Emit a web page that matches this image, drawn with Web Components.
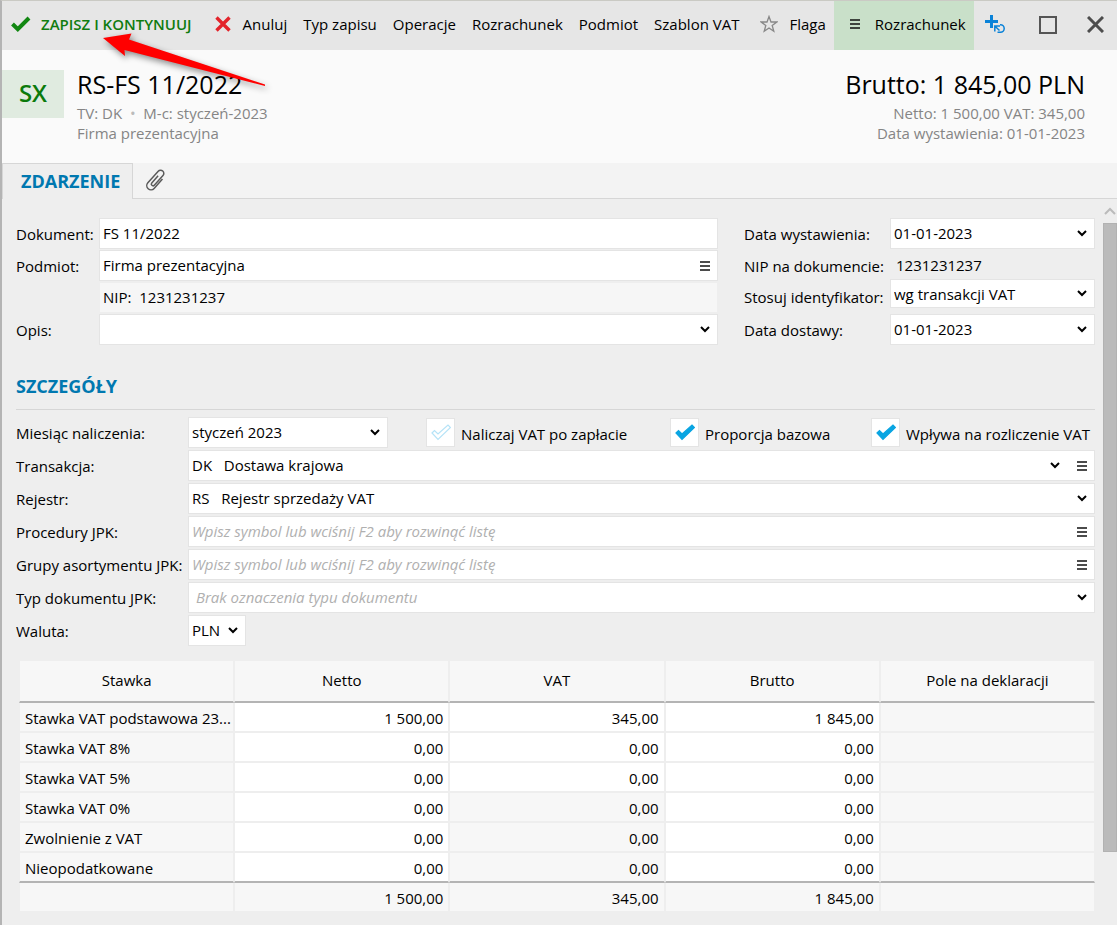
<!DOCTYPE html>
<html lang="pl">
<head>
<meta charset="utf-8">
<title>RS-FS 11/2022</title>
<meta name="viewport" content="width=device-width, initial-scale=1">
<style>
  body{
    margin:0;
    background:#eee;
    color:#000;
    font:15px/20px "Open Sans", "Noto Sans", sans-serif;
  }
</style>
</head>
<body>
<doc-window>
  <tool-bar slot="toolbar">
    <tool-button icon="check" kind="primary">ZAPISZ I KONTYNUUJ</tool-button>
    <tool-button icon="cancel">Anuluj</tool-button>
    <tool-button>Typ zapisu</tool-button>
    <tool-button>Operacje</tool-button>
    <tool-button>Rozrachunek</tool-button>
    <tool-button>Podmiot</tool-button>
    <tool-button>Szablon VAT</tool-button>
    <tool-button icon="star">Flaga</tool-button>
    <tool-button icon="menu" kind="active">Rozrachunek</tool-button>
    <tool-button slot="window" icon="add" label="Dodaj kolejny"></tool-button>
    <tool-button slot="window" icon="maximize" label="Maksymalizuj"></tool-button>
    <tool-button slot="window" icon="close" label="Zamknij"></tool-button>
  </tool-bar>
  <doc-header slot="header" badge="SX">
    <span slot="title">RS-FS 11/2022</span>
    <span slot="info">TV: DK &nbsp;<i style="color:#bbb;font-style:normal">•</i>&nbsp; M-c: styczeń-2023</span>
    <span slot="info">Firma prezentacyjna</span>
    <span slot="total">Brutto: 1 845,00 PLN</span>
    <span slot="sums">Netto: 1 500,00 VAT: 345,00</span>
    <span slot="sums">Data wystawienia: 01-01-2023</span>
  </doc-header>
  <tab-strip slot="tabs" label="ZDARZENIE"></tab-strip>

  <event-form>
    <form-field slot="main" label="Dokument:" value="FS 11/2022"></form-field>
    <form-field slot="main" label="Podmiot:" value="Firma prezentacyjna" menu></form-field>
    <form-field slot="main" type="info" value="NIP:&nbsp; 1231231237"></form-field>
    <form-field slot="main" label="Opis:" type="select" value=""></form-field>

    <form-field slot="side" label="Data wystawienia:" type="select" value="01-01-2023"></form-field>
    <form-field slot="side" label="NIP na dokumencie:" type="plain" value="1231231237"></form-field>
    <form-field slot="side" label="Stosuj identyfikator:" type="select" value="wg transakcji VAT" compact></form-field>
    <form-field slot="side" label="Data dostawy:" type="select" value="01-01-2023"></form-field>

    <form-field slot="month" label="Miesiąc naliczenia:" type="select" value="styczeń 2023"></form-field>
    <check-box slot="checks" label="Naliczaj VAT po zapłacie"></check-box>
    <check-box slot="checks" label="Proporcja bazowa" checked></check-box>
    <check-box slot="checks" label="Wpływa na rozliczenie VAT" checked></check-box>

    <form-field slot="details" label="Transakcja:" type="select" value="DK &nbsp; Dostawa krajowa" menu></form-field>
    <form-field slot="details" label="Rejestr:" type="select" value="RS &nbsp; Rejestr sprzedaży VAT"></form-field>
    <form-field slot="details" label="Procedury JPK:" placeholder="Wpisz symbol lub wciśnij F2 aby rozwinąć listę" menu></form-field>
    <form-field slot="details" label="Grupy asortymentu JPK:" placeholder="Wpisz symbol lub wciśnij F2 aby rozwinąć listę" menu></form-field>
    <form-field slot="details" label="Typ dokumentu JPK:" type="select" value="&nbsp;Brak oznaczenia typu dokumentu" muted></form-field>
    <form-field slot="details" label="Waluta:" type="select" value="PLN" short></form-field>

    <vat-table slot="table"></vat-table>
  </event-form>
  <scroll-track slot="scroll"></scroll-track>
  <pointer-arrow slot="overlay"></pointer-arrow>
</doc-window>

<script>
(function(w, doc) {
  'use strict';

  const icons = {
    check: '<svg width="20" height="16" viewBox="0 0 20 16"><path d="M1.5 8 6.8 13.2 18 2" fill="none" stroke="#128712" stroke-width="4"/></svg>',
    cancel: '<svg width="16" height="16" viewBox="0 0 16 16"><path d="M1.5 1.5 14.5 14.5M14.5 1.5 1.5 14.5" fill="none" stroke="#e3242b" stroke-width="3.4"/></svg>',
    star: '<svg width="18" height="18" viewBox="0 0 18 18"><path d="M9 1.5 11 7H16.8L12.2 10.5 13.8 16.3 9 13 4.2 16.3 5.8 10.5 1.2 7H7Z" fill="none" stroke="#888" stroke-width="1.3"/></svg>',
    menu: '<svg width="10" height="10" viewBox="0 0 10 10"><path d="M0 1H10M0 5H10M0 9H10" stroke="#111" stroke-width="1.6"/></svg>',
    add: '<svg width="20" height="19" viewBox="0 0 20 19"><path d="M6.5 0V13M0 6.5H13" fill="none" stroke="#0a82d8" stroke-width="3"/><path d="M15 9.8H15.5A3.7 3.7 0 0 1 15.5 17.2H12.5M9.8 16.5V11H15M10 11.2 14.5 15.5" fill="none" stroke="#0a82d8" stroke-width="1.5"/></svg>',
    maximize: '<svg width="18" height="18" viewBox="0 0 18 18"><rect x="1" y="1" width="16" height="16" fill="none" stroke="#555" stroke-width="2"/></svg>',
    close: '<svg width="17" height="17" viewBox="0 0 17 17"><path d="M1 1 16 16M16 1 1 16" fill="none" stroke="#4d4d4d" stroke-width="3"/></svg>',
    clip: '<svg width="24" height="26" viewBox="-12 -13 24 26"><path transform="rotate(42)" d="M4.2 -5V7.5A4.2 4.2 0 0 1 -4.2 7.5V-8A3.2 3.2 0 0 1 2.2 -8V5A1.7 1.7 0 0 1 -1.2 5V-4.5" fill="none" stroke="#5a5a5a" stroke-width="1.5"/></svg>',
    chevron: '<svg width="10" height="7" viewBox="0 0 10 7"><path d="M1 1 5 5 9 1" fill="none" stroke="#000" stroke-width="2"/></svg>'
  };

  // shared by every element: open root filled from a template
  class BaseElement extends HTMLElement {
    constructor() {
      super();
      const template = doc.createElement('template');
      template.innerHTML = this.render();
      this.attachShadow({ mode: 'open' });
      this.shadowRoot.appendChild(template.content.cloneNode(true));
    }
    attr(name) {
      return this.getAttribute(name) || '';
    }
  }

  class DocWindow extends BaseElement {
    render() {
      return `
        <style>
          :host{
            display:flex;
            flex-direction:column;
            position:relative;
            box-sizing:border-box;
            min-height:100vh;
            border-left:2px solid #b4b4b4;
            border-top:1px solid #cacac4;
          }
          main{
            flex:1;
            display:grid;
            grid-template-columns:minmax(0,1fr) 14px;
            gap:8px;
          }
        </style>
        <slot name="toolbar"></slot>
        <slot name="header"></slot>
        <slot name="tabs"></slot>
        <main>
          <slot></slot>
          <slot name="scroll"></slot>
        </main>
        <slot name="overlay"></slot>`;
    }
  }

  class ToolBar extends BaseElement {
    render() {
      return `
        <style>
          :host{
            display:flex;
            justify-content:space-between;
            height:49px;
            background:#e6e6e6;
          }
          div{
            display:flex;
          }
        </style>
        <div role="toolbar"><slot></slot></div>
        <div><slot name="window"></slot></div>`;
    }
  }

  class ToolButton extends BaseElement {
    render() {
      const icon = icons[this.attr('icon')] || '';
      const label = this.attr('label');
      return `
        <style>
          :host{
            display:flex;
          }
          button{
            display:flex;
            align-items:center;
            gap:12px;
            padding:0 8px 4px;
            border:none;
            background:none;
            color:#000;
            font:inherit;
            white-space:nowrap;
            cursor:pointer;
          }
          :host([kind="primary"]) button{
            gap:10px;
            padding:0 15px 4px 9px;
            color:#107c10;
            font-weight:600;
          }
          :host([icon="star"]) button{
            padding-left:13px;
            gap:11px;
          }
          :host([kind="active"]) button{
            gap:15px;
            padding:0 8px 4px 16px;
            background:#c9e0c9;
          }
          :host([slot="window"]) button{
            padding:0 13px 2px 17px;
          }
          :host([slot="window"][icon="add"]) button{
            padding:0 17px 2px 0;
          }
        </style>
        <button type="button" ${label ? `aria-label="${label}"` : ''}>${icon}<slot></slot></button>`;
    }
  }

  class DocHeader extends BaseElement {
    render() {
      return `
        <style>
          :host{
            display:flex;
            box-sizing:border-box;
            height:113px;
            padding:20px 32px 0 0;
            background:#fafafa;
            color:#858585;
          }
          .badge{
            width:62px;
            height:48px;
            margin-right:13px;
            background:#e0ebe0;
            color:#0b7a0b;
            font-size:24px;
            line-height:46px;
            font-weight:600;
            text-align:center;
          }
          .right{
            flex:1;
            text-align:right;
          }
          h1, .total{
            margin:0 0 5px;
            color:#000;
            font-size:25px;
            line-height:28px;
            font-weight:400;
          }
          ::slotted([slot="info"]), ::slotted([slot="sums"]){
            display:block;
          }
        </style>
        <div class="badge">${this.attr('badge')}</div>
        <div>
          <h1><slot name="title"></slot></h1>
          <slot name="info"></slot>
        </div>
        <div class="right">
          <div class="total"><slot name="total"></slot></div>
          <slot name="sums"></slot>
        </div>`;
    }
  }

  class TabStrip extends BaseElement {
    render() {
      return `
        <style>
          :host{
            display:flex;
            height:36px;
            background:#f3f3f3;
            box-shadow:inset 0 -1px #d6d6d6;
          }
          button{
            display:flex;
            align-items:center;
            padding:0 11px 2px;
            border:none;
            background:none;
            font:inherit;
          }
          [aria-selected="true"]{
            padding:0 12px 2px 18px;
            border:1px solid #d6d6d6;
            border-bottom:none;
            background:#eee;
            color:#0078b0;
            font-size:18px;
            font-weight:700;
          }
        </style>
        <button type="button" role="tab" aria-selected="true">${this.attr('label')}</button>
        <button type="button" role="tab" aria-label="Załączniki">${icons.clip}</button>`;
    }
  }

  class EventForm extends BaseElement {
    render() {
      return `
        <style>
          :host{
            display:block;
            padding:19px 0 14px 14px;
          }
          .top{
            display:grid;
            grid-template-columns:minmax(0,1fr) 351px;
            gap:26px;
          }
          .main, .side{
            display:grid;
          }
          .main{
            --label-width:83px;
            grid-template-rows:repeat(3,32px) 31px;
          }
          .side{
            --label-width:146px;
            grid-template-rows:32px 29px 35px 31px;
          }
          h2{
            margin:29px 0 7px;
            padding-bottom:11px;
            border-bottom:1px solid #d6d6d6;
            color:#0078b0;
            font-size:18px;
            line-height:24px;
            font-weight:700;
          }
          .period{
            --label-width:172px;
            display:grid;
            grid-template-columns:372px minmax(0,1fr);
            gap:38px;
          }
          .checks{
            display:grid;
            grid-template-columns:244fr 201fr 224fr;
          }
          .details{
            --label-width:172px;
            display:grid;
            grid-auto-rows:31px;
            gap:2px;
            margin:2px 0 15px;
          }
        </style>
        <form>
          <div class="top">
            <div class="main"><slot name="main"></slot></div>
            <div class="side"><slot name="side"></slot></div>
          </div>
          <h2>SZCZEGÓŁY</h2>
          <div class="period">
            <slot name="month"></slot>
            <div class="checks"><slot name="checks"></slot></div>
          </div>
          <div class="details"><slot name="details"></slot></div>
          <slot name="table"></slot>
        </form>`;
    }
  }

  class FormField extends BaseElement {
    render() {
      const label = this.attr('label');
      const value = this.attr('value');
      const type = this.attr('type') || 'text';
      const menu = this.hasAttribute('menu');
      let control = '';
      if (type === 'select')
        control = `<select id="control"><option>${value}</option></select><span class="arrow">${icons.chevron}</span>`;
      else if (type === 'text')
        control = `<input id="control" type="text" value="${value}" placeholder="${this.attr('placeholder')}">`;
      else
        control = `<output id="control">${value}</output>`;
      return `
        <style>
          :host{
            display:grid;
            grid-template-columns:var(--label-width) minmax(0,1fr);
            align-items:start;
          }
          label{
            padding-top:6px;
            white-space:nowrap;
          }
          :host([compact]) label{
            padding-top:8px;
          }
          .box{
            grid-column:2;
            display:flex;
            position:relative;
            box-sizing:border-box;
            height:31px;
            border:1px solid #e4e4e4;
            background:#fff;
          }
          :host([compact]) .box{
            height:29px;
          }
          :host([short]) .box{
            width:58px;
          }
          .info{
            border-color:#eee;
            background:#f6f6f6;
          }
          .plain{
            padding-left:2px;
            border-color:transparent;
            background:none;
          }
          input, select, output{
            flex:1;
            min-width:0;
            margin:0;
            padding:0 3px 1px;
            border:none;
            outline:none;
            background:none;
            color:#000;
            font:inherit;
            line-height:28px;
            appearance:none;
          }
          :host([muted]) select, input::placeholder{
            color:#b0b0b0;
            font-style:italic;
            opacity:1;
          }
          .arrow{
            position:absolute;
            right:7px;
            top:0;
            bottom:0;
            display:flex;
            align-items:center;
            pointer-events:none;
          }
          :host([menu]) .arrow{
            right:34px;
          }
          button{
            display:flex;
            align-items:center;
            padding:0 7px;
            border:none;
            background:none;
          }
        </style>
        ${label ? `<label for="control">${label}</label>` : ''}
        <div class="box ${type}">
          ${control}
          ${menu ? `<button type="button" aria-label="Lista">${icons.menu}</button>` : ''}
        </div>`;
    }
  }

  class CheckBox extends BaseElement {
    render() {
      const on = this.hasAttribute('checked');
      return `
        <style>
          :host{
            display:block;
          }
          label{
            display:flex;
            gap:6px;
            white-space:nowrap;
          }
          .text{
            padding-top:7px;
          }
          .box{
            display:grid;
            place-items:center;
            flex:none;
            box-sizing:border-box;
            width:29px;
            height:29px;
            margin-top:1px;
            border:1px solid #e4e4e4;
            background:#fff;
          }
          input, svg{
            grid-area:1 / 1;
          }
          input{
            width:27px;
            height:27px;
            margin:0;
            appearance:none;
          }
          svg{
            pointer-events:none;
            fill:#fff;
            stroke:#b5e3f7;
          }
          input:checked + svg{
            fill:#0aa5e2;
            stroke:#0aa5e2;
          }
        </style>
        <label>
          <span class="box">
            <input type="checkbox" ${on ? 'checked' : ''}>
            <svg width="21" height="17" viewBox="0 0 21 17"><path d="M2 9 4.5 6.5 8 10 18 1 20.5 3.5 8 15.5Z" stroke-width="1.2"/></svg>
          </span>
          <span class="text">${this.attr('label')}</span>
        </label>`;
    }
  }

  class VatTable extends BaseElement {
    render() {
      const rows = [
        ['Stawka VAT podstawowa 23...', '1 500,00', '345,00', '1 845,00'],
        ['Stawka VAT 8%', '0,00', '0,00', '0,00'],
        ['Stawka VAT 5%', '0,00', '0,00', '0,00'],
        ['Stawka VAT 0%', '0,00', '0,00', '0,00', true],
        ['Zwolnienie z VAT', '0,00', '0,00', '0,00', true],
        ['Nieopodatkowane', '0,00', '0,00', '0,00', true]
      ];
      const body = rows.map(r => `
        <tr>
          <td>${r[0]}</td>
          <td class="edit">${r[1]}</td>
          <td class="${r[4] ? '' : 'edit'}">${r[2]}</td>
          <td class="edit">${r[3]}</td>
          <td></td>
        </tr>`).join('');
      return `
        <style>
          :host{
            display:block;
            margin-left:3px;
          }
          table{
            width:100%;
            table-layout:fixed;
            border-collapse:separate;
            border-spacing:0;
          }
          th, td{
            box-sizing:border-box;
            height:30px;
            padding:2px 5px 0;
            border:0 solid #eee;
            border-width:0 1px 2px;
            background:#f7f7f7;
            background-clip:padding-box;
            font-weight:400;
            text-align:right;
            white-space:nowrap;
            overflow:hidden;
            text-overflow:ellipsis;
          }
          th{
            height:42px;
            padding:0 5px 2px;
            text-align:center;
            border-bottom-color:#b4b4b4;
          }
          td:first-child{
            padding-right:0;
            text-align:left;
          }
          .edit{
            background-color:#fff;
          }
          tbody tr:last-child td{
            border-bottom-color:#b4b4b4;
          }
          tfoot td{
            height:28px;
            border-bottom:none;
          }
        </style>
        <table>
          <thead>
            <tr><th>Stawka</th><th>Netto</th><th>VAT</th><th>Brutto</th><th>Pole na deklaracji</th></tr>
          </thead>
          <tbody>${body}</tbody>
          <tfoot>
            <tr><td></td><td>1 500,00</td><td>345,00</td><td>1 845,00</td><td></td></tr>
          </tfoot>
        </table>`;
    }
  }

  class ScrollTrack extends BaseElement {
    render() {
      return `
        <style>
          :host{
            display:flex;
            flex-direction:column;
          }
          svg{
            margin:8px 1px;
          }
          .thumb{
            flex:629;
            box-sizing:border-box;
            border:1px solid #b2b2b2;
            background:#bbb;
          }
          .rest{
            flex:73;
          }
        </style>
        <svg width="12" height="8" viewBox="0 0 12 8"><path d="M1 7 6 2 11 7" fill="none" stroke="#bbb" stroke-width="2"/></svg>
        <div class="thumb"></div>
        <div class="rest"></div>`;
    }
  }

  // red arrow over the toolbar, pointing at the save button
  class PointerArrow extends BaseElement {
    render() {
      return `
        <style>
          :host{
            position:absolute;
            left:98px;
            top:29px;
            pointer-events:none;
          }
          svg{
            display:block;
            filter:drop-shadow(2px 3px 3px rgba(0,0,0,0.45));
          }
        </style>
        <svg width="180" height="64" viewBox="100 30 180 64"><path d="M103 38 131.5 33.5 129 39.5 265 84.5 265 86 124.5 50 125 56Z" fill="#f00"/></svg>`;
    }
  }

  customElements.define('doc-window', DocWindow);
  customElements.define('tool-bar', ToolBar);
  customElements.define('tool-button', ToolButton);
  customElements.define('doc-header', DocHeader);
  customElements.define('tab-strip', TabStrip);
  customElements.define('event-form', EventForm);
  customElements.define('form-field', FormField);
  customElements.define('check-box', CheckBox);
  customElements.define('vat-table', VatTable);
  customElements.define('scroll-track', ScrollTrack);
  customElements.define('pointer-arrow', PointerArrow);

})(window, document);
</script>
</body>
</html>
